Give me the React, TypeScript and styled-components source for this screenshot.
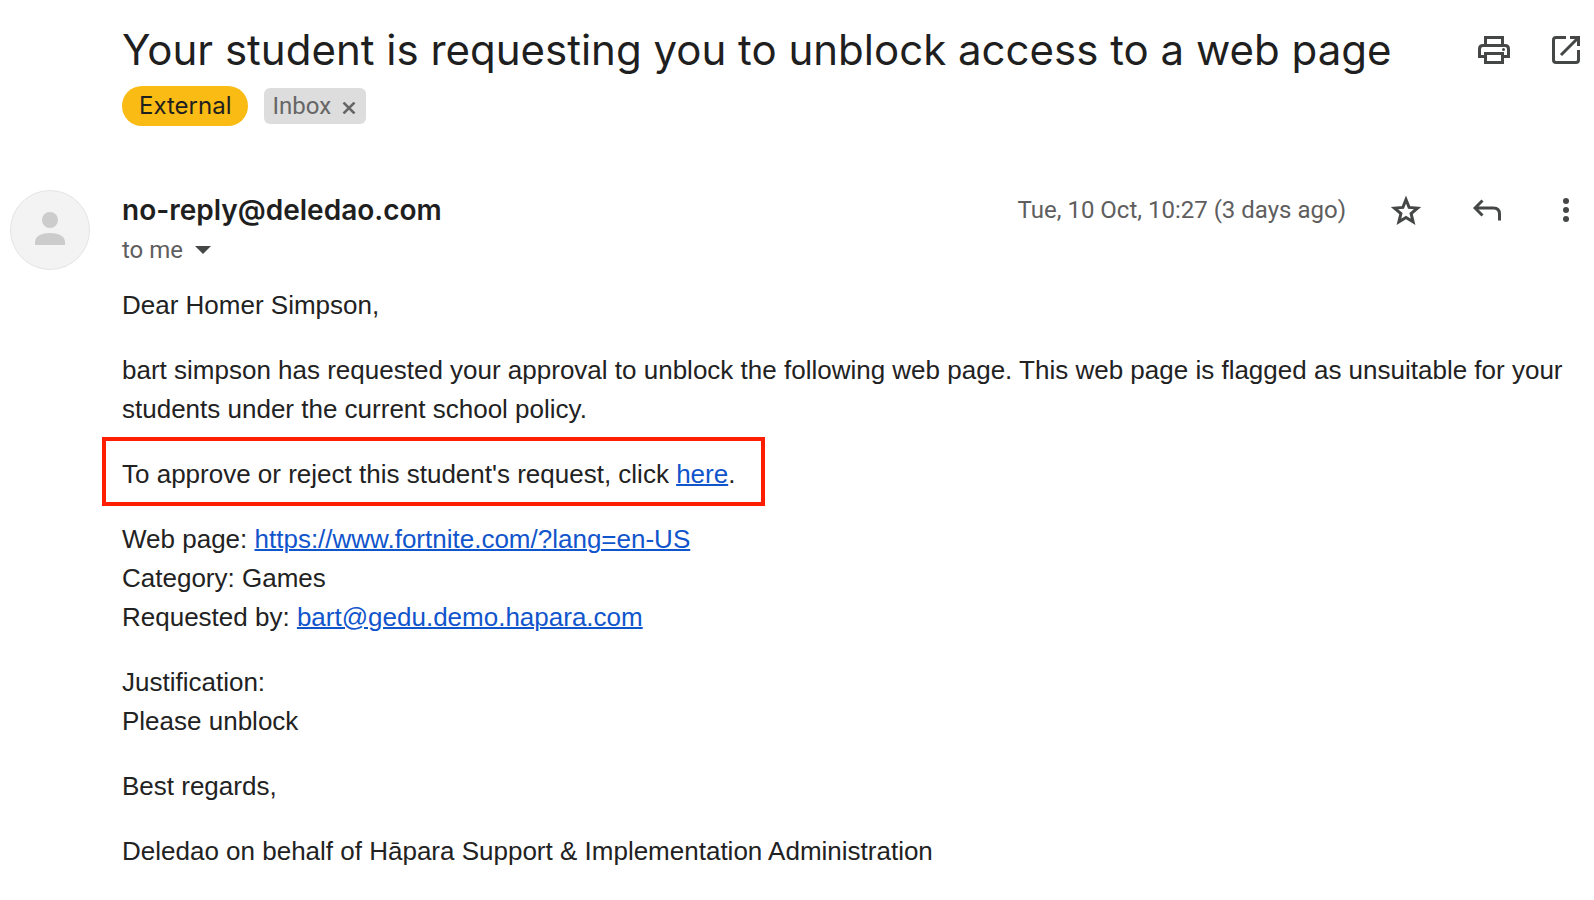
import React from 'react';
import styled, { createGlobalStyle } from 'styled-components';

const GlobalStyle = createGlobalStyle`
  * { box-sizing: border-box; }
  body {
    margin: 0;
    background: #fff;
    color: #1f1f1f;
    font-family: Inter, Roboto, "Liberation Sans", sans-serif;
  }
`;

const Page = styled.main`
  padding: 22px 14px 24px 10px;
`;

const SubjectBar = styled.header`
  display: flex;
  align-items: flex-start;
  justify-content: space-between;
  padding-left: 112px;
`;

const Subject = styled.h1`
  margin: 0;
  font-size: 42px;
  line-height: 56px;
  font-weight: 400;
`;

const Actions = styled.div<{ $gap: number }>`
  display: flex;
  align-items: center;
  flex: none;
  gap: ${({ $gap }) => $gap}px;
`;

const IconButton = styled.button`
  display: flex;
  align-items: center;
  justify-content: center;
  min-width: 28px;
  height: 56px;
  padding: 0;
  border: 0;
  background: none;
  color: #444746;
  cursor: pointer;
`;

const Labels = styled.div`
  display: flex;
  align-items: center;
  gap: 16px;
  padding: 8px 0 0 112px;
`;

const ExternalLabel = styled.span`
  padding: 0 17px;
  border-radius: 20px;
  background: #fabb14;
  font-size: 24px;
  line-height: 40px;
`;

const InboxLabel = styled.span`
  display: flex;
  align-items: center;
  gap: 11px;
  height: 36px;
  padding: 0 10px 0 8px;
  border-radius: 6px;
  background: #ddd;
  color: #666;
  font-family: Roboto, sans-serif;
  font-size: 24px;
`;

const RemoveButton = styled.button`
  display: flex;
  padding: 4px 0 0;
  border: 0;
  background: none;
  color: #666;
  cursor: pointer;
`;

const Message = styled.article`
  display: grid;
  grid-template-columns: 80px minmax(0, 1fr);
  column-gap: 32px;
  padding-top: 64px;
`;

const Avatar = styled.svg`
  width: 80px;
  height: 80px;
`;

const MessageHead = styled.header`
  display: flex;
  align-items: flex-start;
  justify-content: space-between;
`;

const Sender = styled.h2`
  margin: 0;
  font-size: 28px;
  line-height: 40px;
  font-weight: 600;
`;

const Recipient = styled.button`
  display: flex;
  align-items: center;
  gap: 12px;
  padding: 0;
  border: 0;
  background: none;
  color: #5e5e5e;
  font-family: Roboto, sans-serif;
  font-size: 24px;
  line-height: 40px;
  cursor: pointer;
`;

const Meta = styled.div`
  display: flex;
  align-items: center;
  height: 40px;
  gap: 44px;
`;

const SentAt = styled.time`
  color: #5e5e5e;
  font-family: Roboto, sans-serif;
  font-size: 24px;
  line-height: 40px;
`;

const Body = styled.div`
  padding-top: 16px;
  color: #222;
  font-family: "Liberation Sans", Arial, sans-serif;
  font-size: 26px;
  line-height: 39px;
`;

const Paragraph = styled.p`
  margin: 0 0 26px;
`;

const Highlight = styled(Paragraph)`
  width: fit-content;
  margin: -18px 0 14px -20px;
  padding: 14px 26px 8px 16px;
  border: 4px solid #ff1e00;
`;

const Link = styled.a`
  color: #1155cc;
  text-decoration: underline;
  text-decoration-thickness: 2px;
`;

const PrintIcon = () => (
  <svg width="32" height="28" viewBox="0 0 32 28" fill="none" stroke="currentColor" strokeWidth="3" aria-hidden="true">
    <path d="M7.5 9V1.5h17V9" />
    <path d="M7 20.500H1.500V13q0-3.500 3.500-3.500h22q3.500 0 3.500 3.500v7.500H25" />
    <path d="M7.500 17.500h17v9h-17z" />
    <circle cx="25.500" cy="13.500" r="1.500" fill="currentColor" stroke="none" />
  </svg>
);

const OpenIcon = () => (
  <svg width="28" height="28" viewBox="0 0 28 28" fill="none" stroke="currentColor" strokeWidth="3" aria-hidden="true">
    <path d="M14 1.500H4Q1.500 1.500 1.500 4v20q0 2.500 2.500 2.500h20q2.500 0 2.500-2.500V14" />
    <path d="M18 1.500h8.500V10M26 2L9 19" />
  </svg>
);

const StarIcon = () => (
  <svg width="32" height="30" viewBox="0 0 32 30" fill="none" stroke="currentColor" strokeWidth="3" aria-hidden="true">
    <path d="M16 4.500l3.100 7.900 8.400.7-6.400 5.500 2 8.200-7.100-4.400-7.100 4.400 2-8.200-6.400-5.500 8.400-.7z" />
  </svg>
);

const ReplyIcon = () => (
  <svg width="28" height="22" viewBox="0 0 28 22" fill="none" stroke="currentColor" strokeWidth="3" aria-hidden="true">
    <path d="M9.500 1.500L2 9l7.500 7.500M2 9h18.500q6 0 6 6v6.500" />
  </svg>
);

const MoreIcon = () => (
  <svg width="6" height="24" viewBox="0 0 6 24" fill="currentColor" aria-hidden="true">
    <circle cx="3" cy="3" r="3" />
    <circle cx="3" cy="12" r="3" />
    <circle cx="3" cy="21" r="3" />
  </svg>
);

export default function App() {
  return (
    <>
      <GlobalStyle />
      <Page>
        <SubjectBar>
          <Subject>Your student is requesting you to unblock access to a web page</Subject>
          <Actions $gap={42}>
            <IconButton aria-label="Print"><PrintIcon /></IconButton>
            <IconButton aria-label="Open in new window"><OpenIcon /></IconButton>
          </Actions>
        </SubjectBar>
        <Labels>
          <ExternalLabel>External</ExternalLabel>
          <InboxLabel>
            Inbox
            <RemoveButton aria-label="Remove label Inbox">
              <svg width="14" height="12" viewBox="0 0 14 12" fill="none" stroke="currentColor" strokeWidth="2.500" aria-hidden="true">
                <path d="M1.500 0.500l11 11M12.500 0.500l-11 11" />
              </svg>
            </RemoveButton>
          </InboxLabel>
        </Labels>
        <Message>
          <Avatar viewBox="0 0 80 80" aria-hidden="true">
            <circle cx="40" cy="40" r="39.500" fill="#f3f3f3" stroke="#e4e4e4" strokeWidth="1" />
            <circle cx="40" cy="30" r="8" fill="#ccc" />
            <path d="M25 55v-3c0-6 7-9 15-9s15 3 15 9v3z" fill="#ccc" />
          </Avatar>
          <div>
            <MessageHead>
              <div>
                <Sender>no-reply@deledao.com</Sender>
                <Recipient>
                  to me
                  <svg width="16" height="8" viewBox="0 0 16 8" fill="#444746" aria-hidden="true">
                    <path d="M0 0h16l-8 8z" />
                  </svg>
                </Recipient>
              </div>
              <Meta>
                <SentAt>Tue, 10 Oct, 10:27 (3 days ago)</SentAt>
                <Actions $gap={51}>
                  <IconButton aria-label="Star"><StarIcon /></IconButton>
                  <IconButton aria-label="Reply"><ReplyIcon /></IconButton>
                  <IconButton aria-label="More"><MoreIcon /></IconButton>
                </Actions>
              </Meta>
            </MessageHead>
            <Body>
              <Paragraph>Dear Homer Simpson,</Paragraph>
              <Paragraph>
                bart simpson has requested your approval to unblock the following web page. This web page is flagged as
                unsuitable for your students under the current school policy.
              </Paragraph>
              <Highlight>
                To approve or reject this student's request, click <Link href="#approve">here</Link>.
              </Highlight>
              <Paragraph>
                Web page: <Link href="https://www.fortnite.com/?lang=en-US">https://www.fortnite.com/?lang=en-US</Link>
                <br />
                Category: Games
                <br />
                Requested by: <Link href="mailto:bart@gedu.demo.hapara.com">bart@gedu.demo.hapara.com</Link>
              </Paragraph>
              <Paragraph>
                Justification:
                <br />
                Please unblock
              </Paragraph>
              <Paragraph>Best regards,</Paragraph>
              <Paragraph>Deledao on behalf of Hāpara Support &amp; Implementation Administration</Paragraph>
            </Body>
          </div>
        </Message>
      </Page>
    </>
  );
}
